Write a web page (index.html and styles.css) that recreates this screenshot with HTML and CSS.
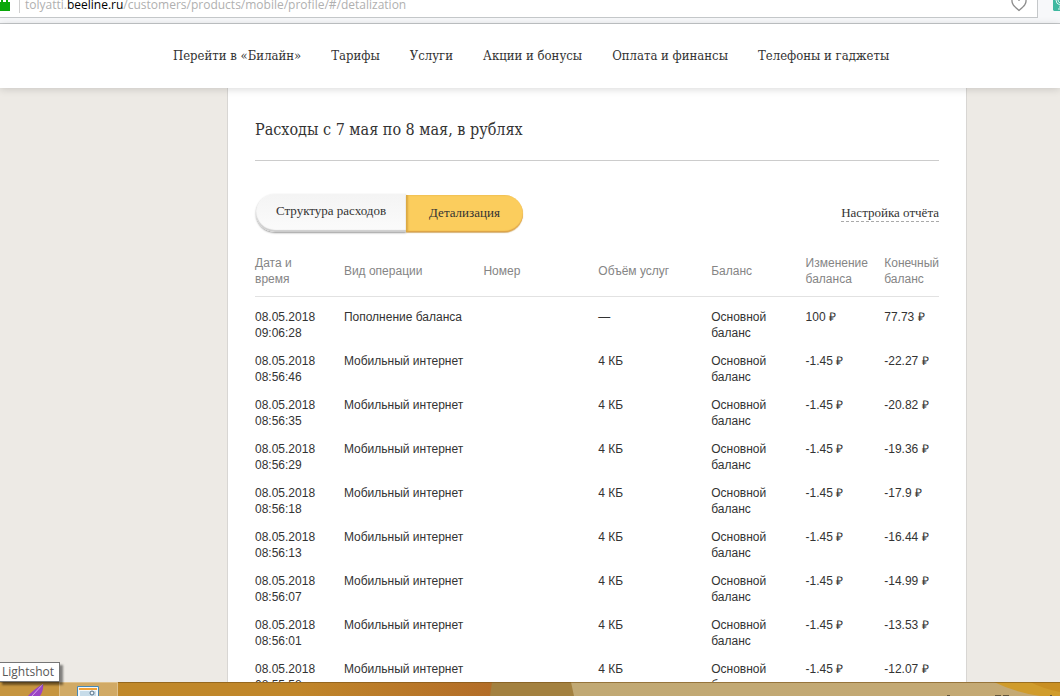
FILE: index.html
```
<!DOCTYPE html>
<html lang="ru">
<head>
<meta charset="utf-8">
<title>Детализация расходов</title>
<link rel="stylesheet" href="styles.css">
</head>
<body>
<header class="browser">
  <div class="address">
    <svg class="lock" width="10" height="11" viewBox="0 0 10 11"><path d="M0 2H10V11H0Z" fill="#0aa80a"/><path d="M2 2V0M7 2V0" stroke="#0aa80a" stroke-width="2"/></svg>
    <span class="divider"></span>
    <span class="url">tolyatti.<b>beeline.ru</b>/customers/products/mobile/profile/#/detalization</span>
    <svg class="heart" width="16" height="12" viewBox="0 0 16 12"><path d="M1 0C.5 4 3 6 8 10.500C13 6 15.500 4 15 0M8 0V1" fill="none" stroke="#8c8c8c" stroke-width="1.300"/></svg>
  </div>
  <svg class="extension" width="7" height="11" viewBox="0 0 7 11"><path d="M0 0H7V11H1L0 10Z" fill="#3fb8a0"/><path d="M3 0Q3 4 7 5M5 0Q5 2 7 3M6 7H7M5 9H7" fill="none" stroke="#e4f6f2"/></svg>
</header>
<nav class="site-nav">
  <a href="#">Перейти в «Билайн»</a>
  <a href="#">Тарифы</a>
  <a href="#">Услуги</a>
  <a href="#">Акции и бонусы</a>
  <a href="#">Оплата и финансы</a>
  <a href="#">Телефоны и гаджеты</a>
</nav>
<main class="page">
  <section class="panel">
    <h1>Расходы с 7 мая по 8 мая, в рублях</h1>
    <div class="toolbar">
      <div class="tabs">
        <button class="tab" type="button">Структура расходов</button>
        <button class="tab active" type="button">Детализация</button>
      </div>
      <a class="settings" href="#">Настройка отчёта</a>
    </div>
    <table class="report">
      <colgroup><col class="c-date"><col class="c-kind"><col class="c-number"><col class="c-volume"><col class="c-balance"><col class="c-change"><col class="c-final"></colgroup>
      <thead>
        <tr><th>Дата и время</th><th>Вид операции</th><th>Номер</th><th>Объём услуг</th><th>Баланс</th><th>Изменение баланса</th><th>Конечный баланс</th></tr>
      </thead>
      <tbody>
        <tr><td>08.05.2018 09:06:28</td><td>Пополнение баланса</td><td></td><td>—</td><td>Основной баланс</td><td>100 ₽</td><td>77.73 ₽</td></tr>
        <tr><td>08.05.2018 08:56:46</td><td>Мобильный интернет</td><td></td><td>4 КБ</td><td>Основной баланс</td><td>-1.45 ₽</td><td>-22.27 ₽</td></tr>
        <tr><td>08.05.2018 08:56:35</td><td>Мобильный интернет</td><td></td><td>4 КБ</td><td>Основной баланс</td><td>-1.45 ₽</td><td>-20.82 ₽</td></tr>
        <tr><td>08.05.2018 08:56:29</td><td>Мобильный интернет</td><td></td><td>4 КБ</td><td>Основной баланс</td><td>-1.45 ₽</td><td>-19.36 ₽</td></tr>
        <tr><td>08.05.2018 08:56:18</td><td>Мобильный интернет</td><td></td><td>4 КБ</td><td>Основной баланс</td><td>-1.45 ₽</td><td>-17.9 ₽</td></tr>
        <tr><td>08.05.2018 08:56:13</td><td>Мобильный интернет</td><td></td><td>4 КБ</td><td>Основной баланс</td><td>-1.45 ₽</td><td>-16.44 ₽</td></tr>
        <tr><td>08.05.2018 08:56:07</td><td>Мобильный интернет</td><td></td><td>4 КБ</td><td>Основной баланс</td><td>-1.45 ₽</td><td>-14.99 ₽</td></tr>
        <tr><td>08.05.2018 08:56:01</td><td>Мобильный интернет</td><td></td><td>4 КБ</td><td>Основной баланс</td><td>-1.45 ₽</td><td>-13.53 ₽</td></tr>
        <tr><td>08.05.2018 08:55:58</td><td>Мобильный интернет</td><td></td><td>4 КБ</td><td>Основной баланс</td><td>-1.45 ₽</td><td>-12.07 ₽</td></tr>
      </tbody>
    </table>
  </section>
</main>
<footer class="taskbar">
  <svg class="wallpaper" viewBox="0 0 1060 14" preserveAspectRatio="none">
    <defs>
      <linearGradient id="gold"><stop offset="0" stop-color="#c08a2a"/><stop offset=".6" stop-color="#c0862a"/><stop offset="1" stop-color="#b36d28"/></linearGradient>
      <linearGradient id="sand"><stop offset="0" stop-color="#c1a974"/><stop offset="1" stop-color="#c4a974"/></linearGradient>
    </defs>
    <rect width="494" height="14" fill="url(#gold)"/>
    <path d="M492 0H574V14H490Z" fill="#a38140"/>
    <path d="M571 0H1060V14H574Z" fill="url(#sand)"/>
    <path d="M994 0H1060V14H1040Q1014 10 994 0Z" fill="#d09c2c"/>
    <path d="M1030 0H1060V10Q1044 7 1030 0Z" fill="#c98f23"/>
    <path d="M0 .5H1060" stroke="#7a5417" stroke-opacity=".6"/>
    <path d="M947 13.500H950M995 13.500H1001M1003 13.500H1009M1050 13.500H1052" stroke="#65563a"/>
  </svg>
  <button class="task first" type="button" aria-label="Lightshot">
    <svg width="16" height="12" viewBox="0 0 16 12"><path d="M0 12Q6 5 15 0Q16 6 12 12Z" fill="#9b45c4"/><path d="M4 12L15 0" stroke="#d6a2ea"/></svg>
  </button>
  <button class="task open" type="button" aria-label="Просмотр изображений">
    <svg width="22" height="10" viewBox="0 0 22 10"><path d="M.5 10V.5H21.500V10" fill="#f3f8fb" stroke="#4788b5"/><path d="M2 3H20" stroke="#f2a136" stroke-width="2"/><path d="M3 5H19V10H3Z" fill="#c7dce9"/><circle cx="15" cy="7" r="2" fill="#eef4f8" stroke="#526f87"/></svg>
  </button>
  <div class="tooltip" role="tooltip">Lightshot</div>
</footer>
</body>
</html>
```
FILE: styles.css
```
* { box-sizing: border-box; }
body {
  margin: 0;
  height: 100vh;
  display: flex;
  flex-direction: column;
  overflow: hidden;
  background: #edeae5;
  color: #333;
  font-family: "Liberation Sans", Arial, sans-serif;
}
a { color: inherit; text-decoration: none; }
button { font: inherit; color: inherit; border: 0; cursor: pointer; }

.browser {
  flex: none;
  height: 24px;
  display: flex;
  justify-content: space-between;
  align-items: flex-start;
  background: #f7f8fa;
  border-bottom: 1px solid #c5c8ca;
}
.address {
  flex: 1;
  height: 18px;
  margin-right: 15px;
  padding-right: 10px;
  display: flex;
  align-items: flex-start;
  background: #fff;
  border: solid #c5c8ca;
  border-width: 0 1px 1px 0;
}
.divider { width: 1px; height: 13px; margin: 0 5px 0 9px; background: #d0d0d0; }
.url {
  flex: 1;
  line-height: 10px;
  font-family: "Open Sans", sans-serif;
  font-size: 12px;
  color: #b0b0b0;
  white-space: nowrap;
}
.url b { font-weight: 400; color: #000; }

.site-nav {
  flex: none;
  z-index: 1;
  height: 64px;
  padding: 0 0 2px 173px;
  display: flex;
  align-items: center;
  gap: 30px;
  background: #fff;
  box-shadow: 0 1px 8px rgba(0, 0, 0, .16);
  font-family: "DejaVu Serif Condensed", "DejaVu Serif", serif;
  font-size: 13px;
  white-space: nowrap;
}

.page {
  flex: 1;
  min-height: 0;
  overflow: hidden;
  padding: 0 93px 0 227px;
}
.panel {
  min-height: 100%;
  padding: 29px 27px 0;
  background: #fff;
  border: solid #d8d6d3;
  border-width: 0 1px;
}
h1 {
  margin: 0;
  padding-bottom: 17px;
  border-bottom: 1px solid #ccc;
  font-family: "DejaVu Serif Condensed", "DejaVu Serif", serif;
  font-size: 16px;
  line-height: 26px;
  font-weight: 400;
}
.toolbar {
  display: flex;
  justify-content: space-between;
  align-items: center;
  padding: 33px 0 23px;
  font-family: "Liberation Serif", serif;
  font-size: 13px;
}
.tabs { display: flex; padding-left: 1px; }
.tab {
  height: 38px;
  padding: 0 20px 4px;
  background: linear-gradient(#f4f4f4, #fbfbfb);
  border-radius: 19px 0 0 19px;
  box-shadow: inset 0 -2px 1px #ccc, 0 1px 2px rgba(0, 0, 0, .4);
}
.tab.active {
  height: 37px;
  margin-top: 1px;
  padding: 0 23px 2px;
  background: #fbcd5d;
  border-radius: 0 19px 19px 0;
  box-shadow: inset 2px 0 2px #dba943, inset 0 -1px 1px #dba04c, 0 1px 1px #d6b47b;
}
.settings { line-height: 16px; border-bottom: 1px dashed #aaa; }

.report {
  width: 100%;
  table-layout: fixed;
  border-collapse: collapse;
  font-size: 12px;
  line-height: 16px;
}
.c-date { width: 13%; }
.c-kind { width: 20.4%; }
.c-number { width: 16.8%; }
.c-volume { width: 16.5%; }
.c-balance { width: 13.8%; }
.c-change { width: 11.5%; }
.c-final { width: 8%; }
th {
  padding: 0 0 9px;
  font-weight: 400;
  text-align: left;
  color: #858585;
  border-bottom: 1px solid #e2e2e2;
}
td { padding: 6px 0; vertical-align: top; }
td:first-child, th:first-child { padding-right: 22px; }
tbody tr:first-child td { padding-top: 12px; }

.taskbar {
  flex: none;
  position: relative;
  z-index: 2;
  height: 14px;
  display: flex;
}
.wallpaper { position: absolute; width: 100%; height: 100%; }
.task {
  position: relative;
  display: flex;
  align-items: flex-end;
  justify-content: center;
  padding: 0;
  background: none;
}
.task.first { width: 59px; padding-left: 12px; background: rgba(255, 255, 255, .1); }
.task.open {
  width: 59px;
  padding-right: 2px;
  background: rgba(255, 255, 255, .28);
  border: solid #dfc18c;
  border-width: 1px 1px 0;
}
.tooltip {
  position: absolute;
  left: -1px;
  bottom: 14px;
  padding: 0 5px 0 2px;
  background: #fff;
  border: 1px solid #767676;
  box-shadow: 3px 3px 2px rgba(0, 0, 0, .45);
  color: #575757;
  font-family: "Open Sans", sans-serif;
  font-size: 12px;
  line-height: 18px;
}
```
